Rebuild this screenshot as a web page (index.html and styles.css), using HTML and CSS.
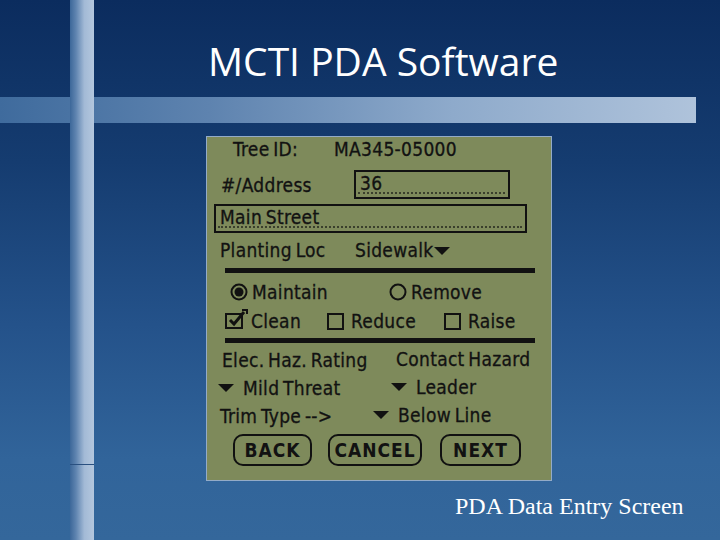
FILE: index.html
```html
<!DOCTYPE html>
<html>
<head>
<meta charset="utf-8">
<link rel="stylesheet" href="styles.css">
</head>
<body>
<div class="slide">
  <h1 class="title">MCTI PDA Software</h1>
  <div class="screen">
    <div class="row r1"><span class="c-tree">Tree ID:</span><span>MA345-05000</span></div>
    <div class="row r2"><span class="c-addr">#/Address</span><div class="field f-num"><span>36</span></div></div>
    <div class="row r3"><div class="field f-street"><span>Main Street</span></div></div>
    <div class="row r4"><span class="c-plant">Planting Loc</span><span class="pick">Sidewalk<i class="tri"></i></span></div>
    <div class="rule"></div>
    <div class="row r5">
      <span class="grp g-maint"><svg class="radio" viewBox="0 0 18 18"><circle cx="9" cy="9" r="7.5" fill="none" stroke="#111" stroke-width="2"/><circle cx="9" cy="9" r="4.5" fill="#111"/></svg>Maintain</span>
      <span class="grp"><svg class="radio" viewBox="0 0 18 18"><circle cx="9" cy="9" r="7.5" fill="none" stroke="#111" stroke-width="2"/></svg>Remove</span>
    </div>
    <div class="row r6">
      <span class="grp g-clean"><svg class="check" viewBox="0 0 24 22"><rect x="1" y="6" width="16" height="14" fill="none" stroke="#111" stroke-width="2"/><path d="M5 12 L9 16 L19 4" fill="none" stroke="#111" stroke-width="3"/><path d="M17 2 h5 v4" fill="none" stroke="#111" stroke-width="2"/></svg>Clean</span>
      <span class="grp g-reduce"><i class="box"></i>Reduce</span>
      <span class="grp"><i class="box"></i>Raise</span>
    </div>
    <div class="rule"></div>
    <div class="row r7"><span class="c-elec">Elec. Haz. Rating</span><span class="up">Contact Hazard</span></div>
    <div class="row r8"><span class="c-mild"><i class="tri"></i>Mild Threat</span><span class="up"><i class="tri"></i>Leader</span></div>
    <div class="row r9"><span class="c-trim">Trim Type --&gt;</span><span class="up"><i class="tri"></i>Below Line</span></div>
    <div class="buttons">
      <span class="btn b-back">BACK</span>
      <span class="btn b-cancel">CANCEL</span>
      <span class="btn b-next">NEXT</span>
    </div>
  </div>
  <p class="caption">PDA Data Entry Screen</p>
</div>
</body>
</html>
```

FILE: styles.css
```css
html, body {
  margin: 0;
  padding: 0;
}
.slide {
  width: 720px;
  height: 540px;
  overflow: hidden;
  background-color: #23528a;
  background-image:
    linear-gradient(#2a5080, #2a5080),
    linear-gradient(to right, #3c6799 0%, #5f84b0 25%, #a3bad6 60%, #b4c7de 100%),
    linear-gradient(to right, #3f6b9d 0%, #5e83af 30%, #8eaacb 65%, #afc3db 100%),
    linear-gradient(to bottom, #0b2c5e 0%, #153c70 30%, #24528a 60%, #31649a 85%, #34679b 100%);
  background-repeat: no-repeat;
  background-position: 70px 464px, 70px 0, 0 97px, 0 0;
  background-size: 24px 1px, 24px 540px, 696px 26px, 720px 540px;
}
.title {
  margin: 0;
  padding: 38px 0 0 208px;
  height: 46px;
  font-family: "Open Sans", sans-serif;
  font-weight: normal;
  font-size: 39px;
  line-height: 46px;
  color: #ffffff;
  letter-spacing: 0;
}
.screen {
  box-sizing: border-box;
  margin: 52px 0 0 206px;
  width: 346px;
  height: 345px;
  border: 1px solid #93abc8;
  background: #7e8a5b;
  font-family: "DejaVu Sans Condensed", "DejaVu Sans", sans-serif;
  font-size: 19px;
  letter-spacing: 0.3px;
  word-spacing: -2px;
  color: #121212;
  -webkit-text-stroke: 0.3px #121212;
  display: flex;
  flex-direction: column;
}
.row {
  display: flex;
  align-items: center;
  height: 24px;
  white-space: nowrap;
}
.r1 { margin-top: 0; padding-left: 26px; }
.c-tree { width: 101px; }
.r2 { margin-top: 9px; height: 29px; padding-left: 14px; }
.c-addr { width: 133px; }
.field {
  box-sizing: border-box;
  height: 29px;
  border: 2px solid #111;
  position: relative;
  display: flex;
  align-items: center;
  padding-left: 4px;
}
.field span {
  margin-top: -3px;
}
.field::after {
  content: "";
  position: absolute;
  left: 2px;
  right: 3px;
  bottom: 3px;
  border-bottom: 2px dotted #3a3f2c;
}
.f-num { width: 156px; }
.r3 { margin-top: 5px; height: 29px; padding-left: 7px; }
.f-street { width: 313px; }
.r4 { margin-top: 5px; padding-left: 13px; }
.c-plant { width: 135px; }
.pick { display: flex; align-items: center; }
.tri {
  display: inline-block;
  width: 0;
  height: 0;
  border-left: 8px solid transparent;
  border-right: 8px solid transparent;
  border-top: 8px solid #111;
}
.pick .tri { margin-left: 1px; margin-top: 2px; }
.rule {
  margin: 6px 0 0 18px;
  width: 310px;
  height: 5px;
  background: #111;
}
.r5 { margin-top: 7px; padding-left: 23px; }
.grp { display: flex; align-items: center; }
.g-maint { width: 159px; }
.radio { width: 18px; height: 18px; margin-right: 4px; }
.r6 { margin-top: 5px; padding-left: 18px; }
.g-clean { width: 102px; }
.g-reduce { width: 117px; }
.check { width: 24px; height: 22px; margin-right: 2px; margin-top: -4px; }
.box {
  box-sizing: border-box;
  display: inline-block;
  width: 17px;
  height: 17px;
  border: 2px solid #111;
  margin-right: 7px;
}
.r6 + .rule { margin-top: 5px; }
.r7 { margin-top: 5px; padding-left: 15px; }
.c-elec { width: 174px; }
.up { display: flex; align-items: center; margin-top: -3px; }
.r8 { margin-top: 4px; padding-left: 11px; }
.c-mild { width: 173px; display: flex; align-items: center; }
.c-mild .tri, .up .tri { margin-right: 9px; }
.r9 { margin-top: 4px; padding-left: 13px; }
.c-trim { width: 153px; }
.buttons {
  display: flex;
  margin-top: 6px;
  padding-left: 26px;
  gap: 16px;
}
.btn {
  box-sizing: border-box;
  height: 32px;
  border: 2px solid #111;
  border-radius: 10px;
  display: flex;
  align-items: center;
  justify-content: center;
  font-weight: bold;
  font-size: 19px;
  letter-spacing: 1px;
  -webkit-text-stroke: 0;
}
.b-back { width: 79px; }
.b-cancel { width: 94px; }
.b-next { width: 81px; margin-left: 2px; }
.caption {
  margin: 12px 0 0 455px;
  font-family: "Liberation Serif", "Times New Roman", serif;
  font-size: 24px;
  line-height: 26px;
  color: #ffffff;
}
```
